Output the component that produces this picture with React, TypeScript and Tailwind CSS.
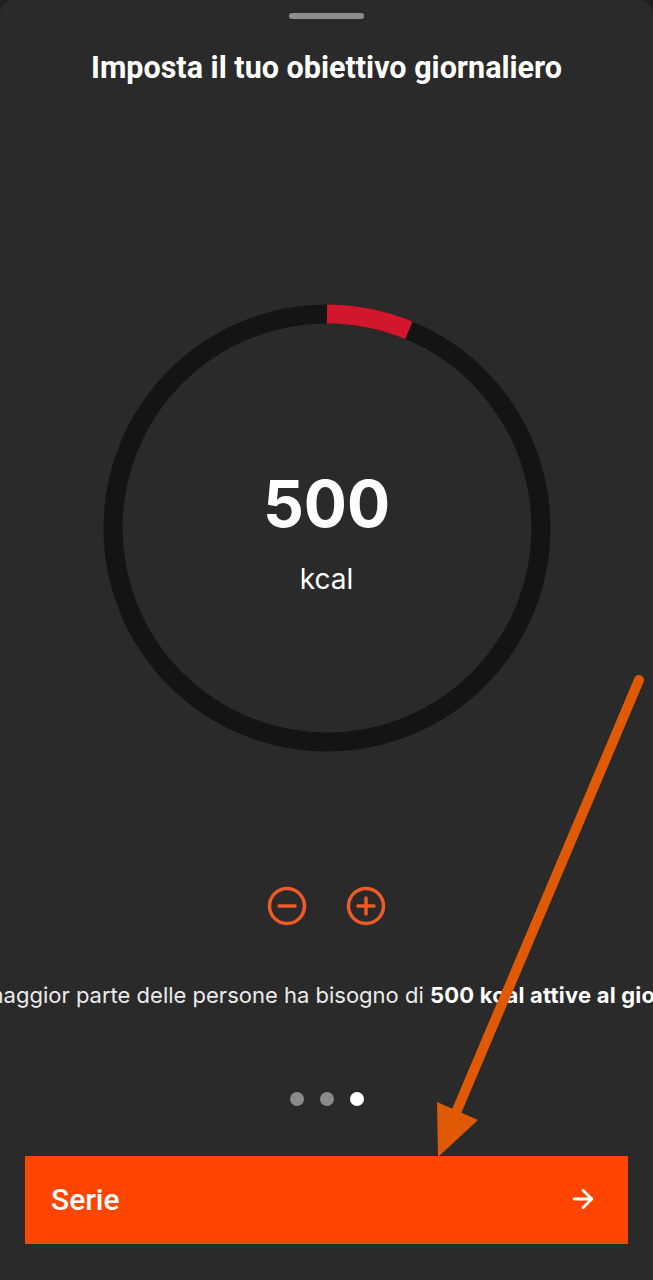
import React, { useState } from 'react';
import { ArrowRight } from 'lucide-react';

// goal picker state
const STEP = 50;
const MAX = 8000;

const Ring: React.FC<{ value: number }> = ({ value }) => {
  const r = 214;
  const c = 2 * Math.PI * r;
  const frac = Math.min(value / MAX, 1);
  // arc never drawn shorter than 1/16 of the ring
  const arc = c * Math.max(frac, 0.0625);
  return (
    <svg className="absolute inset-0" width="448" height="448" viewBox="0 0 448 448">
      <circle cx="224" cy="224" r={r} fill="none" stroke="#141414" strokeWidth="19" />
      <circle
        cx="224"
        cy="224"
        r={r}
        fill="none"
        stroke="#d2162b"
        strokeWidth="19"
        strokeDasharray={`${arc} ${c}`}
        transform="rotate(-90 224 224)"
      />
    </svg>
  );
};

const RoundBtn: React.FC<{ kind: 'minus' | 'plus'; onClick: () => void }> = ({ kind, onClick }) => (
  <button onClick={onClick} className="w-10 h-10 flex items-center justify-center">
    <svg width="40" height="40" viewBox="0 0 40 40" fill="none" stroke="#ef5a26" strokeWidth="3.5" strokeLinecap="round">
      <circle cx="20" cy="20" r="17.5" />
      <line x1="12" y1="20" x2="28" y2="20" />
      {kind === 'plus' && <line x1="20" y1="12" x2="20" y2="28" />}
    </svg>
  </button>
);

export default function App() {
  const [goal, setGoal] = useState(500);

  return (
    <div className="relative w-full min-h-[1280px] bg-[#1f1f1f] overflow-hidden">
      <div className="flex flex-col items-center min-h-[1280px] bg-[#2a2a2a] rounded-t-[14px]">
        <div className="mt-[13px] w-[75px] h-[6px] rounded-full bg-[#8c8c8c]" />

        <h1 className="mt-[32px] text-[30.5px] leading-[34px] font-bold text-white font-['Roboto',sans-serif]">
          Imposta il tuo obiettivo giornaliero
        </h1>

        <div className="relative mt-[219px] w-[448px] h-[448px] flex flex-col items-center pt-[168px] font-['Inter',sans-serif] text-white">
          <Ring value={goal} />
          <span className="relative text-[64px] leading-none font-bold">{goal}</span>
          <span className="relative mt-[29px] text-[28px] leading-none">kcal</span>
        </div>

        <div className="mt-[134px] flex gap-[39px]">
          <RoundBtn kind="minus" onClick={() => setGoal((g) => Math.max(STEP, g - STEP))} />
          <RoundBtn kind="plus" onClick={() => setGoal((g) => Math.min(MAX, g + STEP))} />
        </div>

        <div className="mt-[54px] w-full flex justify-center overflow-hidden">
          <p className="shrink-0 whitespace-nowrap text-[22px] leading-[30px] text-[#ececec] font-['Inter',sans-serif]">
            La maggior parte delle persone ha bisogno di{' '}
            <span className="font-bold text-white tracking-[0.2px]">{goal} kcal attive al giorno.</span>
          </p>
        </div>

        <div className="mt-[82px] flex gap-4">
          <span className="w-[14px] h-[14px] rounded-full bg-[#8a8a8a]" />
          <span className="w-[14px] h-[14px] rounded-full bg-[#8a8a8a]" />
          <span className="w-[14px] h-[14px] rounded-full bg-white" />
        </div>

        <button className="mt-[50px] self-stretch mx-[25px] h-[88px] bg-[#ff4500] border-b-2 border-[#e0501c] flex items-center justify-between pl-[26px] pr-[30px] text-white">
          <span className="text-[30px] font-medium font-['Roboto',sans-serif]">Serie</span>
          <ArrowRight size={30} strokeWidth={2.25} />
        </button>
      </div>

      {/* annotation arrow drawn over the screenshot */}
      <svg className="absolute inset-0 pointer-events-none" width="653" height="1280" viewBox="0 0 653 1280">
        <line x1="639" y1="680" x2="455" y2="1115" stroke="#e05a06" strokeWidth="10" strokeLinecap="round" />
        <polygon points="438,1157 437,1102 478,1120" fill="#e05a06" />
      </svg>
    </div>
  );
}
